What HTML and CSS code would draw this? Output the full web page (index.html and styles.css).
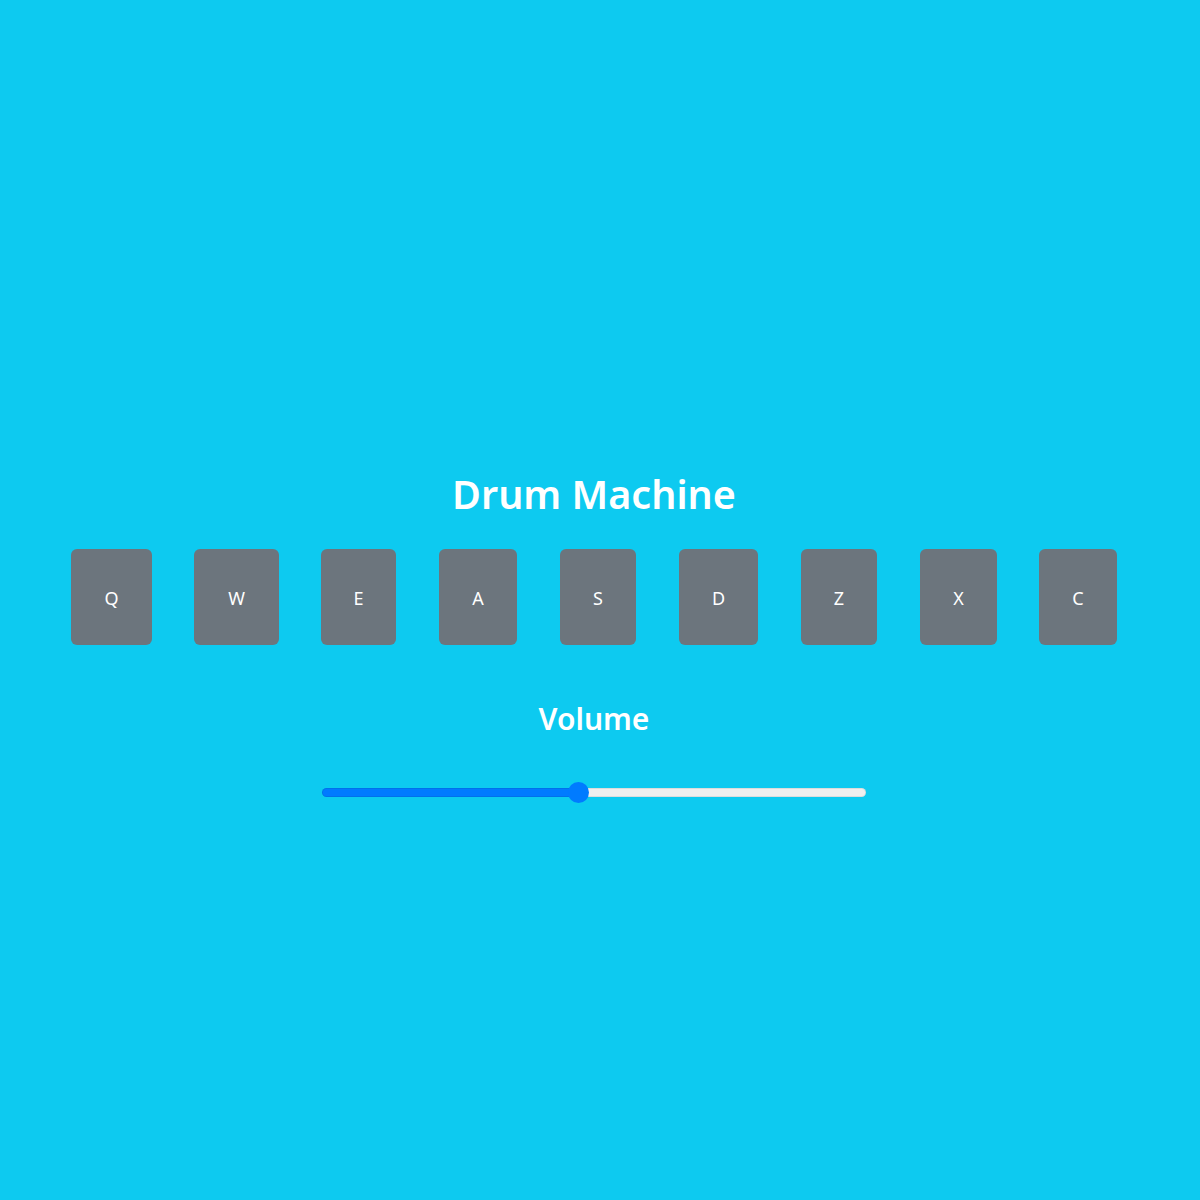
FILE: index.html
```html
<!DOCTYPE html>
<html lang="en">
<head>
<meta charset="utf-8">
<title>Drum Machine</title>
<link rel="stylesheet" href="styles.css">
</head>
<body>
<main class="app" id="drum-machine">
  <h1 class="title">Drum Machine</h1>
  <div class="pads">
    <button class="pad pad-q">Q</button>
    <button class="pad pad-w">W</button>
    <button class="pad pad-e">E</button>
    <button class="pad pad-a">A</button>
    <button class="pad pad-s">S</button>
    <button class="pad pad-d">D</button>
    <button class="pad pad-z">Z</button>
    <button class="pad pad-x">X</button>
    <button class="pad pad-c">C</button>
  </div>
  <h2 class="volume-label">Volume</h2>
  <input class="volume" type="range" min="0" max="1" step="0.01" value="0.47" style="--p:47%">
</main>
</body>
</html>
```
FILE: styles.css
```css
html, body {
  margin: 0;
  padding: 0;
}
body {
  background: #0dcaf0;
  font-family: "Noto Sans", "Open Sans", sans-serif;
  color: #fff;
}
.app {
  display: flex;
  flex-direction: column;
  align-items: center;
  padding: 470px 12px 0 0;
  min-height: 1200px;
  box-sizing: border-box;
}
.title {
  margin: 0;
  font-size: 39.5px;
  line-height: 48px;
  font-weight: 600;
}
.pads {
  display: flex;
  gap: 42px;
  margin-top: 31px;
}
.pad {
  height: 96px;
  padding: 2px 0 0;
  border: none;
  border-radius: 6px;
  background: #6c757d;
  color: #fff;
  font-family: inherit;
  font-size: 18px;
}
.pad-q { width: 81px; }
.pad-w { width: 85px; }
.pad-e { width: 75px; }
.pad-a { width: 78px; margin-left: 1px; }
.pad-s { width: 76px; margin-left: 1px; }
.pad-d { width: 79px; margin-left: 1px; }
.pad-z { width: 76px; margin-left: 1px; }
.pad-x { width: 77px; margin-left: 1px; }
.pad-c { width: 78px; }
.volume-label {
  margin: 55px 0 0;
  font-size: 30px;
  line-height: 38px;
  font-weight: 600;
}
.volume {
  -webkit-appearance: none;
  appearance: none;
  width: 544px;
  height: 21px;
  margin: 44px 0 0;
  background: transparent;
}
.volume::-webkit-slider-runnable-track {
  height: 9px;
  border-radius: 5px;
  background: linear-gradient(to right, #007bff var(--p), #efefef var(--p));
  box-shadow: inset 0 0 0 1px rgba(0, 0, 0, 0.08);
}
.volume::-webkit-slider-thumb {
  -webkit-appearance: none;
  appearance: none;
  width: 21px;
  height: 21px;
  border-radius: 50%;
  background: #007bff;
  border: none;
  margin-top: -6px;
}
```
